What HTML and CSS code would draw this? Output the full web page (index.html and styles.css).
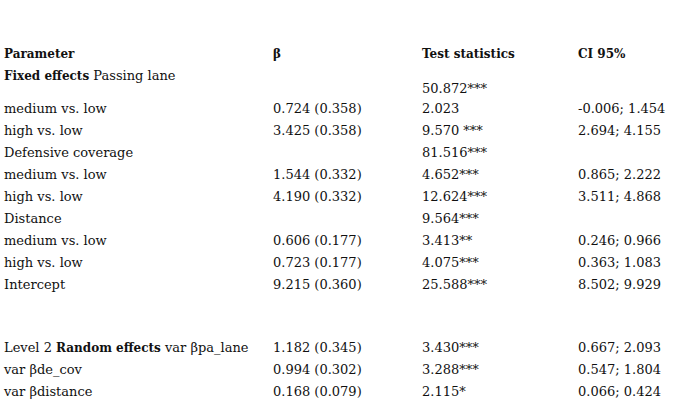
FILE: index.html
```html
<!DOCTYPE html>
<html>
<head>
<meta charset="utf-8">
<link rel="stylesheet" href="styles.css">
</head>
<body>
<table class="results">
  <colgroup>
    <col class="c-param">
    <col class="c-beta">
    <col class="c-test">
    <col class="c-ci">
  </colgroup>
  <thead>
    <tr class="row head">
      <th>Parameter</th>
      <th>β</th>
      <th>Test statistics</th>
      <th>CI 95%</th>
    </tr>
  </thead>
  <tbody>
    <tr class="row tall">
      <td class="top"><b>Fixed effects</b> Passing lane</td>
      <td></td>
      <td class="bottom">50.872***</td>
      <td></td>
    </tr>
    <tr class="row"><td>medium vs. low</td><td>0.724 (0.358)</td><td>2.023</td><td>-0.006; 1.454</td></tr>
    <tr class="row"><td>high vs. low</td><td>3.425 (0.358)</td><td>9.570 ***</td><td>2.694; 4.155</td></tr>
    <tr class="row"><td>Defensive coverage</td><td></td><td>81.516***</td><td></td></tr>
    <tr class="row"><td>medium vs. low</td><td>1.544 (0.332)</td><td>4.652***</td><td>0.865; 2.222</td></tr>
    <tr class="row"><td>high vs. low</td><td>4.190 (0.332)</td><td>12.624***</td><td>3.511; 4.868</td></tr>
    <tr class="row"><td>Distance</td><td></td><td>9.564***</td><td></td></tr>
    <tr class="row"><td>medium vs. low</td><td>0.606 (0.177)</td><td>3.413**</td><td>0.246; 0.966</td></tr>
    <tr class="row"><td>high vs. low</td><td>0.723 (0.177)</td><td>4.075***</td><td>0.363; 1.083</td></tr>
    <tr class="row"><td>Intercept</td><td>9.215 (0.360)</td><td>25.588***</td><td>8.502; 9.929</td></tr>
    <tr class="spacer"><td colspan="4"></td></tr>
    <tr class="row"><td>Level 2 <b>Random effects</b> var βpa_lane</td><td>1.182 (0.345)</td><td>3.430***</td><td>0.667; 2.093</td></tr>
    <tr class="row"><td>var βde_cov</td><td>0.994 (0.302)</td><td>3.288***</td><td>0.547; 1.804</td></tr>
    <tr class="row"><td>var βdistance</td><td>0.168 (0.079)</td><td>2.115*</td><td>0.066; 0.424</td></tr>
  </tbody>
</table>
</body>
</html>
```

FILE: styles.css
```css
html, body {
  margin: 0;
  padding: 0;
  background: #ffffff;
}
body {
  padding: 43px 0 0 4px;
  font-family: "DejaVu Serif", serif;
  font-size: 13px;
  color: #111111;
}
.results {
  border-collapse: collapse;
  table-layout: fixed;
  width: 682px;
}
.c-param { width: 269px; }
.c-beta { width: 149px; }
.c-test { width: 156px; }
.c-ci { width: 108px; }
.results th,
.results td {
  padding: 0;
  text-align: left;
  vertical-align: middle;
  white-space: nowrap;
  height: 22px;
}
.results th,
.results b {
  font-weight: bold;
  font-size: 12px;
}
.row.tall td {
  height: 29px;
}
.results td.top {
  vertical-align: top;
  padding-top: 3px;
}
.results td.bottom {
  vertical-align: bottom;
  padding-bottom: 1px;
}
.spacer td {
  height: 41px;
}
```
